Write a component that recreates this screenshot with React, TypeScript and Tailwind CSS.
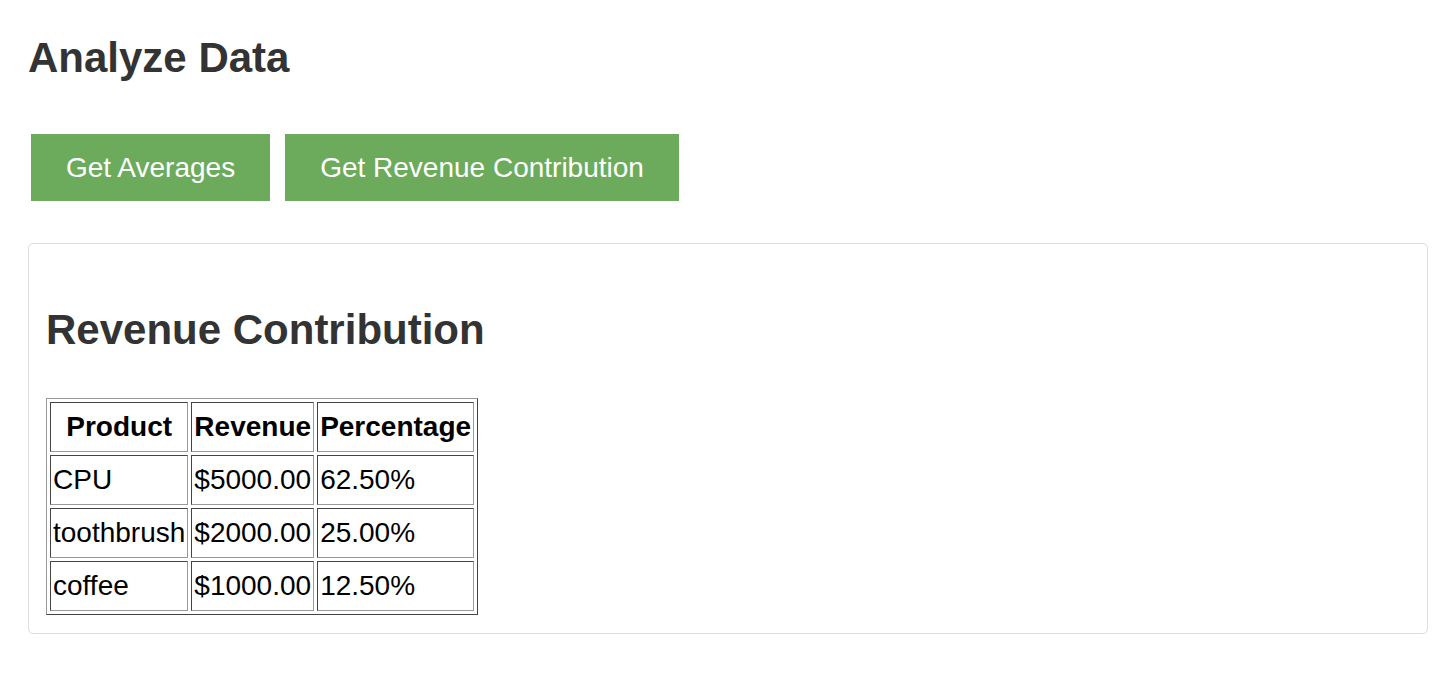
// Analyze Data page - revenue contribution table

const rows = [
  { product: 'CPU', revenue: '$5000.00', pct: '62.50%' },
  { product: 'toothbrush', revenue: '$2000.00', pct: '25.00%' },
  { product: 'coffee', revenue: '$1000.00', pct: '12.50%' },
];

const cell =
  'border border-t-[#444] border-l-[#444] border-r-[#999] border-b-[#999] px-[2px] py-[2px] leading-[44px]';

export default function App() {
  return (
    <div className="min-h-screen bg-white px-[28px] pt-[34px] font-['Liberation_Sans',Arial,sans-serif] text-[28px] text-black">
      <h1 className="text-[42px] font-bold leading-[47px] text-[#333]">Analyze Data</h1>

      <div className="mt-[53px] ml-[3px] flex gap-[15px]">
        <button
          type="button"
          className="bg-[#6dab5c] px-[35px] py-[17px] text-[28px] leading-[33px] text-white"
        >
          Get Averages
        </button>
        <button
          type="button"
          className="bg-[#6dab5c] px-[35px] py-[17px] text-[28px] leading-[33px] text-white"
        >
          Get Revenue Contribution
        </button>
      </div>

      <div className="mt-[42px] rounded-[5px] border border-[#ddd] p-[17px] pb-[18px]">
        <h2 className="mt-[45px] mb-[45px] text-[42px] font-bold leading-[47px] text-[#333]">
          Revenue Contribution
        </h2>
        <table className="border-separate border-spacing-x-[3px] border-spacing-y-[3.5px] border border-t-[#999] border-l-[#999] border-r-[#444] border-b-[#444]">
          <thead>
            <tr>
              <th className={`${cell} text-center font-bold`}>Product</th>
              <th className={`${cell} text-center font-bold`}>Revenue</th>
              <th className={`${cell} text-center font-bold`}>Percentage</th>
            </tr>
          </thead>
          <tbody>
            {rows.map((r) => (
              <tr key={r.product}>
                <td className={cell}>{r.product}</td>
                <td className={cell}>{r.revenue}</td>
                <td className={cell}>{r.pct}</td>
              </tr>
            ))}
          </tbody>
        </table>
      </div>
    </div>
  );
}
